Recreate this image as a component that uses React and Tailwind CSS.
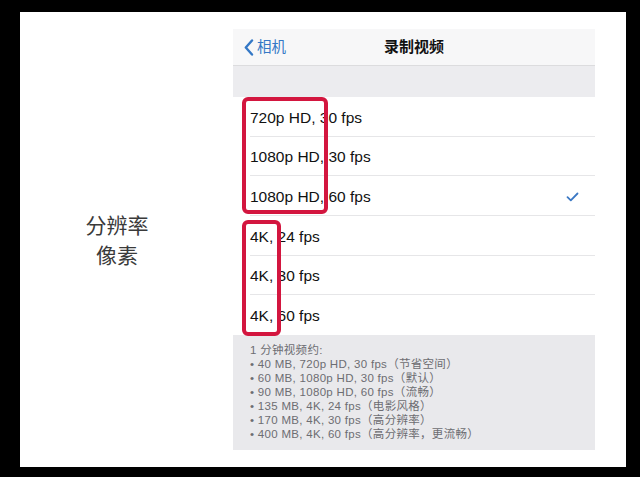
import React from 'react';

const cjk = { fontFamily: '"Liberation Sans", "Noto Sans CJK SC", sans-serif' };

const modes = [
  '720p HD, 30 fps',
  '1080p HD, 30 fps',
  '1080p HD, 60 fps',
  '4K, 24 fps',
  '4K, 30 fps',
  '4K, 60 fps',
];

const notes = [
  '• 40 MB, 720p HD, 30 fps（节省空间）',
  '• 60 MB, 1080p HD, 30 fps（默认）',
  '• 90 MB, 1080p HD, 60 fps（流畅）',
  '• 135 MB, 4K, 24 fps（电影风格）',
  '• 170 MB, 4K, 30 fps（高分辨率）',
  '• 400 MB, 4K, 60 fps（高分辨率，更流畅）',
];

const Check = () => (
  <svg width="13" height="10" viewBox="0 0 13 10" fill="none">
    <path d="M1.5 5.2 L4.8 8.3 L11.5 1.5" stroke="#3b78c4" strokeWidth="1.8" strokeLinecap="round" strokeLinejoin="round" />
  </svg>
);

const Row = ({ label, checked, last }) => (
  <div className="h-[39.67px] flex items-stretch bg-white pl-[17px]">
    <div className={`flex-1 flex items-center justify-between pr-[16px] pt-[2px] ${last ? '' : 'border-b border-[#e6e6e8]'}`}>
      <span className="text-[15.5px] text-[#111]">{label}</span>
      {checked && <Check />}
    </div>
  </div>
);

export default function App() {
  return (
    <div className="w-[640px] h-[477px] bg-black pt-[12px] pl-[20px]" style={cjk}>
      <div className="w-[606px] h-[455px] bg-white flex items-center">
        <div className="w-[213px] pr-[19px] pt-[2px] flex flex-col items-center text-[21px] leading-[30px] text-[#3a3a3a]">
          <span>分辨率</span>
          <span>像素</span>
        </div>

        <div className="relative w-[362px] h-[421px] flex flex-col bg-[#ebebee]">
          <div className="h-[37px] bg-[#f7f7f8] border-b border-[#dcdcde] flex items-center relative pt-[1px]">
            <div className="flex items-center gap-[3px] pl-[11px] text-[#3478c6] text-[14.5px]">
              <svg width="10" height="17" viewBox="0 0 10 17" fill="none">
                <path d="M8 1.5 L1.8 8.5 L8 15.5" stroke="#3478c6" strokeWidth="2.4" strokeLinecap="round" strokeLinejoin="round" />
              </svg>
              <span>相机</span>
            </div>
            <span className="absolute left-1/2 -translate-x-1/2 text-[15px] font-semibold text-[#111]">录制视频</span>
          </div>

          <div className="h-[31px] bg-[#ececef]" />

          <div className="flex flex-col">
            {modes.map((m, i) => (
              <Row key={m} label={m} checked={i === 2} last={i === modes.length - 1} />
            ))}
          </div>

          <div className="flex-1 bg-[#e9e9ec] pl-[17px] pt-[8px] text-[11.5px] leading-[14px] tracking-[0.3px] text-[#6d6d72]">
            <div>1 分钟视频约:</div>
            {notes.map((n) => (
              <div key={n}>{n}</div>
            ))}
          </div>

          <div className="absolute left-[9px] top-[68px] w-[86px] h-[117px] border-[4.5px] border-[#d3163f] rounded-[6px]" />
          <div className="absolute left-[9px] top-[191px] w-[39px] h-[116px] border-[4.5px] border-[#d3163f] rounded-[6px]" />
        </div>
      </div>
    </div>
  );
}
